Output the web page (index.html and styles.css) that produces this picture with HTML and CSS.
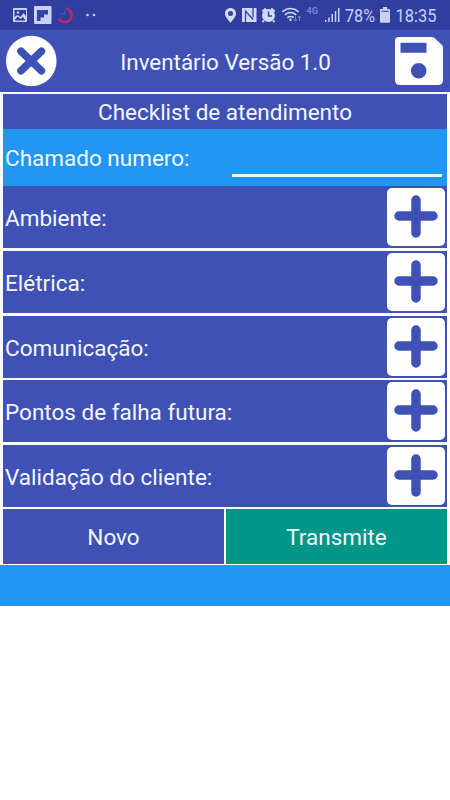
FILE: index.html
```html
<!DOCTYPE html>
<html lang="pt-BR">
<head>
<meta charset="utf-8">
<title>Inventário</title>
<link rel="stylesheet" href="styles.css">
</head>
<body>
<div class="status">
  <svg class="status-left" width="100" height="30" viewBox="0 0 100 30">
    <path fill="#c9d0f2" fill-rule="evenodd" d="M14 8h12q1 0 1 1v12q0 1-1 1H14q-1 0-1-1V9q0-1 1-1zM14.500 10v7l3-2 3 2 3-4 2.500 3V10zM14.500 20.500h11L23 17l-2.500 2-3-2.500z"/>
    <circle cx="18" cy="12.500" r="1.200" fill="#c9d0f2"/>
    <rect x="34" y="6" width="17.500" height="18" rx="1" fill="#c9d0f2"/>
    <path fill="#3443a5" d="M37 10h11v4.500h-4v3h-3.500v3.500H37z"/>
    <path d="M66 8.200A7 7 0 1 1 58.500 18.500" fill="none" stroke="#b72b62" stroke-width="2.500"/>
    <path d="M60.500 13.500l4 1V10.500" fill="none" stroke="#3a56a8" stroke-width="1.300"/>
    <circle cx="87.500" cy="15" r="1.300" fill="#c9d0f2"/>
    <circle cx="94" cy="15" r="1.300" fill="#c9d0f2"/>
  </svg>
  <svg class="status-right" width="118" height="30" viewBox="224 0 118 30">
    <path fill="#d3d9f7" fill-rule="evenodd" d="M230.500 8c-3.200 0-5.500 2.400-5.500 5.500 0 3.500 3.500 6.500 5.500 9.500 2-3 5.500-6 5.500-9.500 0-3.100-2.300-5.500-5.500-5.500zm0 3a2.500 2.500 0 1 1 0 5 2.500 2.500 0 0 1 0-5z"/>
    <path fill="#d3d9f7" d="M242 8h14.500v14H242z"/>
    <path fill="none" stroke="#3443a5" stroke-width="1.300" d="M245.500 22V11l7.500 8.500M253 8v9.500"/>
    <circle cx="268.500" cy="15.500" r="6.500" fill="#d3d9f7"/>
    <path d="M262.300 11.500l3.500-3M274.700 11.500l-3.500-3M264 20.500l-1.500 1.500M273 20.500l1.500 1.500" stroke="#d3d9f7" stroke-width="2"/>
    <path d="M268.500 11.500v4.500h3.500" fill="none" stroke="#3443a5" stroke-width="1.500"/>
    <g fill="none" stroke="#d3d9f7" stroke-width="1.500">
      <path d="M282.300 11.800q8.200-6.500 16.400 0M284.800 14.800q5.700-4.600 11.400 0M287.300 17.600q3.200-2.400 6.400 0"/>
    </g>
    <circle cx="290.500" cy="19.800" r="1.300" fill="#d3d9f7"/>
    <path d="M295.500 16v5m-1.500-2l1.500 2 1.500-2M299.500 21v-5m-1.500 2l1.500-2 1.500 2" fill="none" stroke="#7884cf" stroke-width=".9"/>
    <text x="306.500" y="13.500" class="network" textLength="11.500" lengthAdjust="spacingAndGlyphs">4G</text>
    <path fill="#c9d0f2" d="M325 20h1.500v2H325zM328.200 17.500h1.500V22h-1.500zM331.500 14h1.500v8h-1.500zM334.800 11h1.500v11h-1.500zM338 8h1.500v14H338z"/>
  </svg>
  <svg class="status-text" width="100" height="30" viewBox="342 0 100 30">
    <text x="345" y="22" class="clock" textLength="30" lengthAdjust="spacingAndGlyphs">78%</text>
    <path fill="#c9d0f2" fill-rule="evenodd" d="M383 7h4v2h2.500q.5 0 .5.500V22q0 .7-.7.700h-8.600q-.7 0-.7-.7V9.500q0-.5.500-.5h2.500zM381.500 10.800v1h7v-1z"/>
    <text x="395.500" y="22" class="clock" textLength="41" lengthAdjust="spacingAndGlyphs">18:35</text>
  </svg>
</div>
<header class="header">
  <svg class="close" width="52" height="52" viewBox="0 0 52 52">
    <circle cx="26.300" cy="26" r="25.300" fill="#fff"/>
    <path d="M16 16.200l20.400 19.600M36.400 16.200L16 35.800" stroke="#3f51b5" stroke-width="7.600" stroke-linecap="round"/>
  </svg>
  <h1 class="title">Inventário Versão 1.0</h1>
  <svg class="save" width="50" height="50" viewBox="0 0 50 50">
    <path fill="#fff" fill-rule="evenodd" d="M5 1h33q1.500 0 2.500 1l7.500 7q1 1 1 2.500V44q0 5-5 5H6q-5 0-5-5V5q0-4 4-4zM6.500 6.800v10h26v-10zM24.700 27a7.800 7.800 0 1 0 0 15.600 7.800 7.800 0 0 0 0-15.600z"/>
  </svg>
</header>
<main class="panel">
  <h2 class="subtitle">Checklist de atendimento</h2>
  <div class="ticket"><span class="label">Chamado numero:</span><span class="field"></span></div>
  <div class="rows">
    <div class="row"><span class="label">Ambiente:</span><svg class="plus" viewBox="0 0 58 58"><rect width="58" height="58" rx="5"/><path d="M29 12v33M12 28h34"/></svg></div>
    <div class="row"><span class="label">Elétrica:</span><svg class="plus" viewBox="0 0 58 58"><rect width="58" height="58" rx="5"/><path d="M29 12v33M12 28h34"/></svg></div>
    <div class="row tight"><span class="label">Comunicação:</span><svg class="plus" viewBox="0 0 58 58"><rect width="58" height="58" rx="5"/><path d="M29 12v33M12 28h34"/></svg></div>
    <div class="row"><span class="label">Pontos de falha futura:</span><svg class="plus" viewBox="0 0 58 58"><rect width="58" height="58" rx="5"/><path d="M29 12v33M12 28h34"/></svg></div>
    <div class="row tight"><span class="label">Validação do cliente:</span><svg class="plus" viewBox="0 0 58 58"><rect width="58" height="58" rx="5"/><path d="M29 12v33M12 28h34"/></svg></div>
  </div>
  <div class="actions"><div class="button">Novo</div><div class="button send">Transmite</div></div>
</main>
<div class="footer"></div>
</body>
</html>
```
FILE: styles.css
```css
* { box-sizing: border-box; }
body {
  margin: 0;
  background: #fff;
  color: #f4f6ff;
  font-family: Roboto, "Liberation Sans", sans-serif;
  font-size: 22.5px;
}
svg { display: block; flex: none; }
.status { display: flex; height: 30px; background: #303f9f; }
.status-right { margin-left: 124px; }
.clock { font-size: 19px; fill: #c9d0f2; }
.network { font-size: 9.5px; font-weight: 700; fill: #7884cf; }
.header {
  display: flex;
  align-items: center;
  justify-content: space-between;
  height: 62px;
  padding: 0 6px 0 5px;
  background: #3f51b5;
}
.title { margin: 1px 0 0; font-size: 22.4px; font-weight: 400; white-space: nowrap; }
.panel { padding: 2px 3px 0; }
.subtitle {
  height: 35px;
  margin: 0;
  background: #3f51b5;
  font-size: 22.5px;
  font-weight: 400;
  line-height: 37px;
  text-align: center;
}
.ticket {
  display: flex;
  align-items: center;
  justify-content: space-between;
  height: 57px;
  padding: 0 5px 0 2px;
  background: #2196f3;
}
.ticket .label { padding-top: 1px; }
.field { width: 210px; height: 39px; border-bottom: 3px solid #e8f8ff; }
.row {
  display: flex;
  align-items: center;
  justify-content: space-between;
  height: 62px;
  margin-bottom: 3px;
  padding: 0 2.5px 0 2px;
  background: #3f51b5;
}
.row.tight { margin-bottom: 2px; }
.label { line-height: 28px; padding-top: 2px; white-space: nowrap; }
.plus { width: 58px; height: 58px; }
.plus rect { fill: #fff; }
.plus path { fill: none; stroke: #3f51b5; stroke-width: 9.5px; stroke-linecap: round; }
.actions { display: grid; grid-template-columns: 1fr 1fr; gap: 2px; height: 55px; }
.button { background: #3f51b5; line-height: 57px; height: 55px; text-align: center; }
.send { background: #009688; }
.footer { height: 41px; margin-top: 1px; background: #2196f3; }
```
